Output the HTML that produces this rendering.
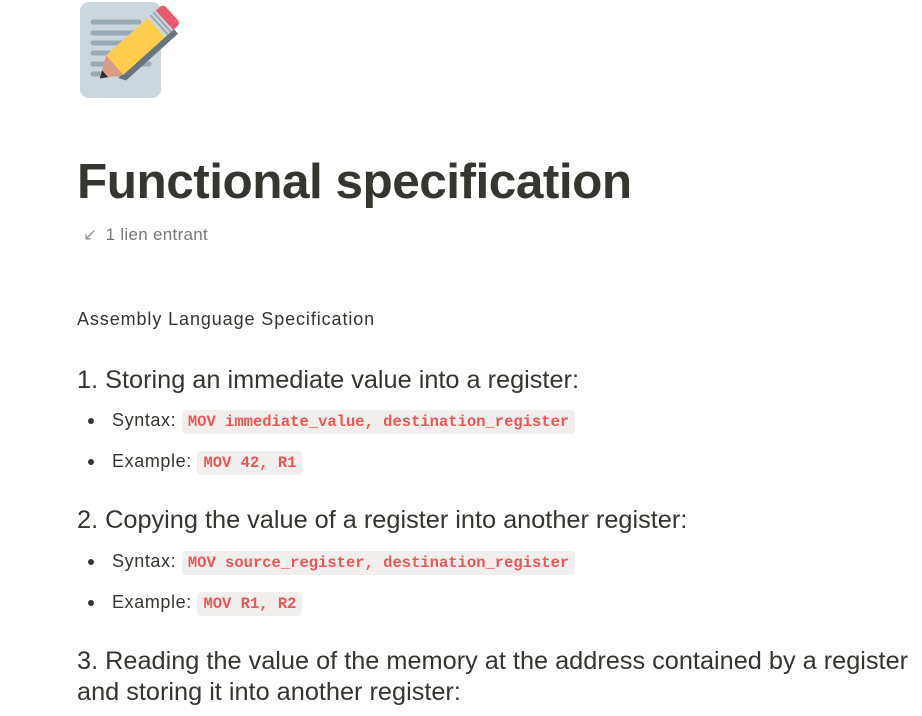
<!DOCTYPE html>
<html><head><meta charset="utf-8"><style>
body{margin:0;background:#fff;width:922px;height:716px;overflow:hidden;font-family:"Liberation Sans",sans-serif;color:#37352f;position:relative}
.a{position:absolute;white-space:nowrap}
h1{position:absolute;left:77px;top:153px;margin:0;font-size:49.5px;font-weight:bold;letter-spacing:-0.5px}
.h{font-size:25.3px;left:77px}
.b{font-size:18px;left:112px;letter-spacing:0.6px}
.b:before{content:"";position:absolute;left:-24px;top:8px;width:6px;height:6px;border-radius:50%;background:#37352f}
code{font-family:"Liberation Mono",monospace;font-weight:bold;color:#eb5757;background:#f0efed;border-radius:4px;padding:3px 6px;font-size:15.5px;letter-spacing:0}
</style></head><body>
<svg class="a" style="left:79px;top:0px" width="100" height="100" viewBox="0 0 100 100">
<rect x="1" y="2" width="81" height="96" rx="9" fill="#ccd6dd"/>
<g stroke="#99aab5" stroke-width="5" stroke-linecap="round">
<line x1="14" y1="22" x2="60" y2="22"/><line x1="14" y1="33" x2="60" y2="33"/><line x1="14" y1="43" x2="55" y2="43"/><line x1="14" y1="53" x2="50" y2="53"/><line x1="14" y1="64" x2="70" y2="64"/><line x1="14" y1="74" x2="40" y2="74"/></g>
<g transform="translate(58,45) rotate(-42)">
<path d="M-36 12 L38 12 L38 19 L-32 19 Z" fill="#66757f"/>
<rect x="-30" y="-13" width="56" height="26" fill="#ffcc4d"/>
<path d="M-30 -13 L-30 13 L-50 0 Z" fill="#d99e82"/>
<path d="M-43 -4.5 L-43 4.5 L-50 0 Z" fill="#292f33"/>
<rect x="26" y="-13" width="11" height="26" fill="#ccd6dd"/>
<rect x="29" y="-13" width="2" height="26" fill="#99aab5"/>
<rect x="33" y="-13" width="2" height="26" fill="#99aab5"/>
<path d="M37 -13 L42 -13 Q47 -13 47 -8 L47 8 Q47 13 42 13 L37 13 Z" fill="#ea596e"/>
</g>
</svg>
<h1>Functional specification</h1>
<div class="a" style="left:83px;top:225px;font-size:17px;color:#9b9a97;letter-spacing:0.3px">↙ <span style="margin-left:3px;color:#787774">1 lien entrant</span></div>
<div class="a" style="left:77px;top:309px;font-size:18px;letter-spacing:0.9px">Assembly Language Specification</div>
<div class="a h" style="top:366px">1. Storing an immediate value into a register:</div>
<div class="a b" style="top:410px">Syntax: <code>MOV immediate_value, destination_register</code></div>
<div class="a b" style="top:451px">Example: <code>MOV 42, R1</code></div>
<div class="a h" style="top:506px">2. Copying the value of a register into another register:</div>
<div class="a b" style="top:551px">Syntax: <code>MOV source_register, destination_register</code></div>
<div class="a b" style="top:592px">Example: <code>MOV R1, R2</code></div>
<div class="a h" style="top:646px;line-height:31px">3. Reading the value of the memory at the address contained by a register<br>and storing it into another register:</div>
</body></html>
